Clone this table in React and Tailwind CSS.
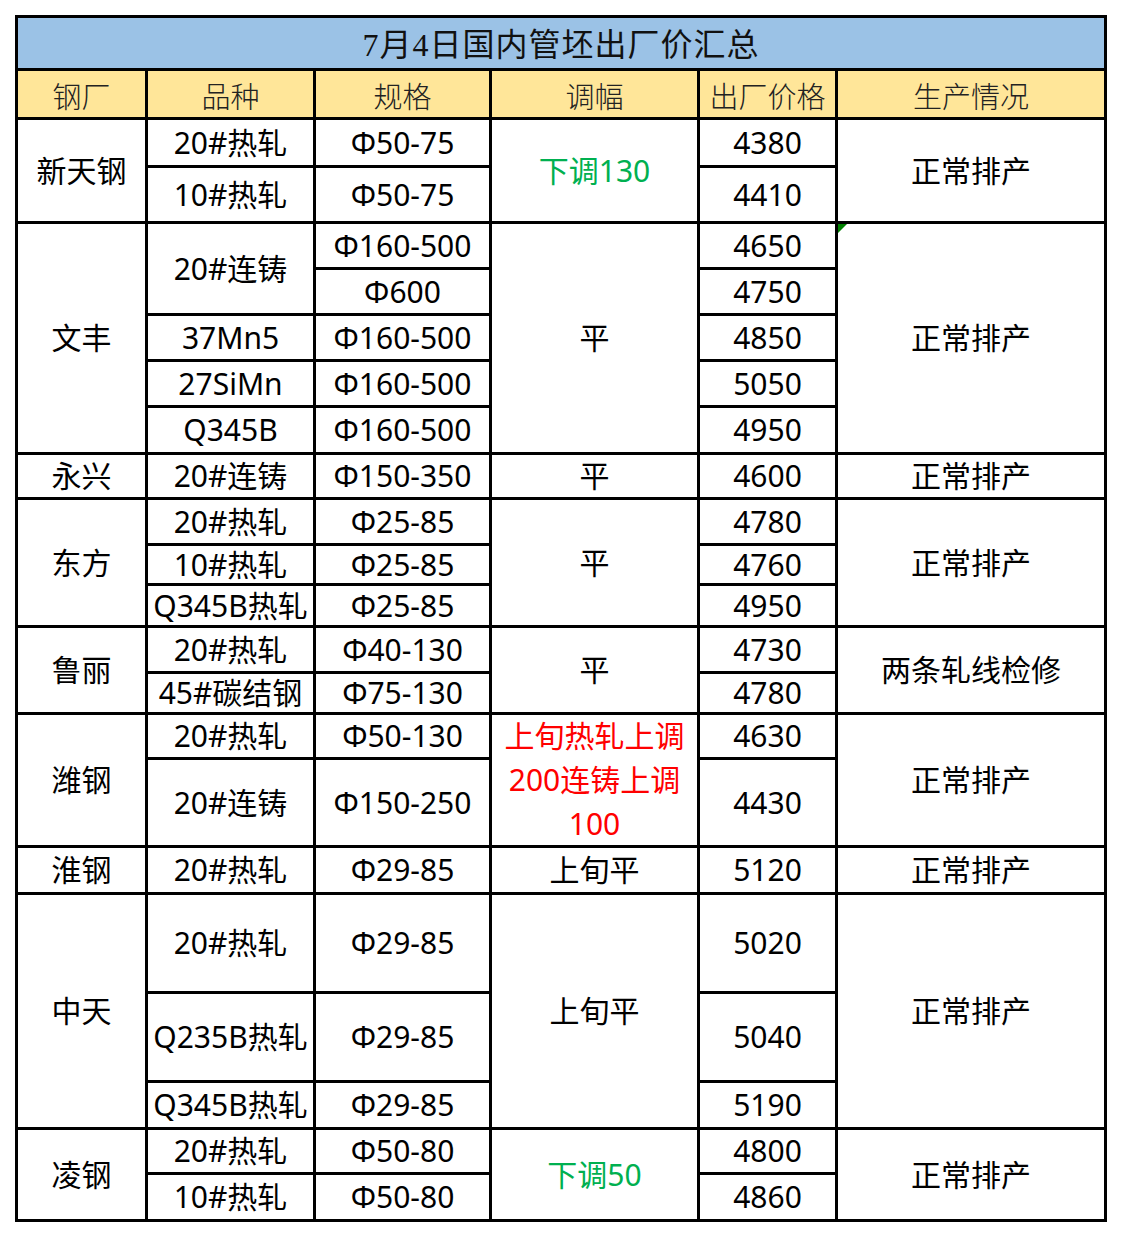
import React from 'react'

const body = { fontFamily: '"Noto Sans", "Noto Sans CJK SC", sans-serif' }

// rows in order; auto placement fills around the spans like a table
const cells = [
  // 新天钢
  { t: '新天钢', span: 'row-span-2' },
  { t: '20#热轧' },
  { t: 'Φ50-75' },
  { t: '下调130', span: 'row-span-2', color: 'text-[#00B050]' },
  { t: '4380' },
  { t: '正常排产', span: 'row-span-2' },
  { t: '10#热轧' },
  { t: 'Φ50-75' },
  { t: '4410' },
  // 文丰
  { t: '文丰', span: 'row-span-5' },
  { t: '20#连铸', span: 'row-span-2' },
  { t: 'Φ160-500' },
  { t: '平', span: 'row-span-5' },
  { t: '4650' },
  { t: '正常排产', span: 'row-span-5', flag: true },
  { t: 'Φ600' },
  { t: '4750' },
  { t: '37Mn5' },
  { t: 'Φ160-500' },
  { t: '4850' },
  { t: '27SiMn' },
  { t: 'Φ160-500' },
  { t: '5050' },
  { t: 'Q345B' },
  { t: 'Φ160-500' },
  { t: '4950' },
  // 永兴
  { t: '永兴' },
  { t: '20#连铸' },
  { t: 'Φ150-350' },
  { t: '平' },
  { t: '4600' },
  { t: '正常排产' },
  // 东方
  { t: '东方', span: 'row-span-3' },
  { t: '20#热轧' },
  { t: 'Φ25-85' },
  { t: '平', span: 'row-span-3' },
  { t: '4780' },
  { t: '正常排产', span: 'row-span-3' },
  { t: '10#热轧' },
  { t: 'Φ25-85' },
  { t: '4760' },
  { t: 'Q345B热轧' },
  { t: 'Φ25-85' },
  { t: '4950' },
  // 鲁丽
  { t: '鲁丽', span: 'row-span-2' },
  { t: '20#热轧' },
  { t: 'Φ40-130' },
  { t: '平', span: 'row-span-2' },
  { t: '4730' },
  { t: '两条轧线检修', span: 'row-span-2' },
  { t: '45#碳结钢' },
  { t: 'Φ75-130' },
  { t: '4780' },
  // 潍钢
  { t: '潍钢', span: 'row-span-2' },
  { t: '20#热轧' },
  { t: 'Φ50-130' },
  { t: ['上旬热轧上调', '200连铸上调', '100'], span: 'row-span-2', color: 'text-[#FF0000]' },
  { t: '4630' },
  { t: '正常排产', span: 'row-span-2' },
  { t: '20#连铸' },
  { t: 'Φ150-250' },
  { t: '4430' },
  // 淮钢
  { t: '淮钢' },
  { t: '20#热轧' },
  { t: 'Φ29-85' },
  { t: '上旬平' },
  { t: '5120' },
  { t: '正常排产' },
  // 中天
  { t: '中天', span: 'row-span-3' },
  { t: '20#热轧' },
  { t: 'Φ29-85' },
  { t: '上旬平', span: 'row-span-3' },
  { t: '5020' },
  { t: '正常排产', span: 'row-span-3' },
  { t: 'Q235B热轧' },
  { t: 'Φ29-85' },
  { t: '5040' },
  { t: 'Q345B热轧' },
  { t: 'Φ29-85' },
  { t: '5190' },
  // 凌钢
  { t: '凌钢', span: 'row-span-2' },
  { t: '20#热轧' },
  { t: 'Φ50-80' },
  { t: '下调50', span: 'row-span-2', color: 'text-[#00B050]' },
  { t: '4800' },
  { t: '正常排产', span: 'row-span-2' },
  { t: '10#热轧' },
  { t: 'Φ50-80' },
  { t: '4860' },
]

const headers = ['钢厂', '品种', '规格', '调幅', '出厂价格', '生产情况']

function Cell({ c }) {
  const lines = Array.isArray(c.t) ? c.t : [c.t]
  return (
    <div
      className={`relative flex flex-col items-center justify-center bg-white text-center text-[30px] leading-[44px] whitespace-nowrap ${
        c.span || ''
      } ${c.color || 'text-black'}`}
      style={body}
    >
      {c.flag && (
        <span className="absolute left-0 top-0 h-0 w-0 border-t-[9px] border-r-[9px] border-t-[#008000] border-r-transparent" />
      )}
      {lines.map((l, i) => (
        <span key={i}>{l}</span>
      ))}
    </div>
  )
}

export default function App() {
  return (
    <div className="min-h-[1238px] bg-white pl-[15px] pt-[15px]">
      <div className="inline-grid grid-cols-[127px_165px_173px_205px_135px_266px] grid-rows-[50px_46px_45px_53px_43px_43px_43px_43px_44px_42px_43px_37px_39px_43px_38px_42px_85px_44px_96px_86px_44px_42px_44px] gap-[3px] bg-black p-[3px]">
        <div
          className="col-span-6 flex items-center justify-center bg-[#9BC2E6] pt-[3px] text-[32px] tracking-[1px] text-[#111]"
          style={{ fontFamily: '"Liberation Serif", "Noto Sans CJK SC", serif' }}
        >
          7月4日国内管坯出厂价汇总
        </div>
        {headers.map((h) => (
          <div
            key={h}
            className="flex items-center justify-center bg-[#FFE699] pt-[4px] text-[29px] font-light text-[#222]"
            style={{ fontFamily: '"Noto Sans CJK SC", sans-serif' }}
          >
            {h}
          </div>
        ))}
        {cells.map((c, i) => (
          <Cell key={i} c={c} />
        ))}
      </div>
    </div>
  )
}
